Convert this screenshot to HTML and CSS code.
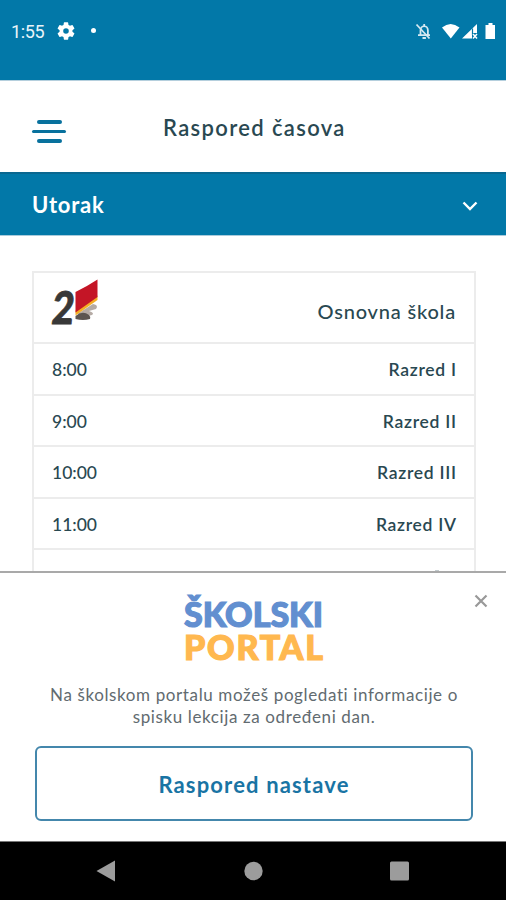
FILE: index.html
```html
<!DOCTYPE html>
<html lang="sr-Latn">

<head>
    <meta charset="UTF-8" />
    <meta name="viewport" content="width=device-width, initial-scale=1.0" />
    <title>Raspored časova</title>
    <link rel="stylesheet" href="styles.css">
</head>

<body>
    <div class="status-bar">
        <span class="clock">1:55</span>
        <svg class="gear" width="18" height="18" viewBox="2 2 20 20" fill="#fff">
            <path d="M19.14 12.94a7.1 7.1 0 0 0 0-1.88l2.03-1.58a.5.5 0 0 0 .12-.61l-1.92-3.32a.5.5 0 0 0-.59-.22l-2.39.96a7 7 0 0 0-1.62-.94l-.36-2.54A.5.5 0 0 0 13.92 2.4h-3.84a.5.5 0 0 0-.47.41l-.36 2.54a7 7 0 0 0-1.62.94l-2.39-.96a.5.5 0 0 0-.59.22L2.74 8.87a.5.5 0 0 0 .12.61l2.03 1.58a7.1 7.1 0 0 0 0 1.88l-2.03 1.58a.5.5 0 0 0-.12.61l1.92 3.32c.12.22.37.29.59.22l2.39-.96c.5.38 1.03.7 1.62.94l.36 2.54c.05.24.24.41.48.41h3.84c.24 0 .44-.17.47-.41l.36-2.54a7 7 0 0 0 1.62-.94l2.39.96c.22.08.47 0 .59-.22l1.92-3.32a.5.5 0 0 0-.12-.61zM12 15.1a3.1 3.1 0 1 1 0-6.2 3.1 3.1 0 0 1 0 6.2z" />
        </svg>
        <span class="dot"></span>
        <svg class="status-icons" width="84" height="20" viewBox="0 0 84 20">
            <g fill="none" stroke="#d5e8f1" stroke-width="1.8">
                <path d="M6.5 14V9.5a3.7 4.3 0 0 1 7.4 0V14M4 14.2h12M10.2 3v2.5M8.5 17h3.4" />
                <path d="M2.500 3.500l13 14" />
            </g>
            <path d="M28 6.5q8.5-7 17.5 0L36.8 17.500z" fill="#fff" />
            <path d="M48 17.5L63 3v9h-5v5.5z" fill="#fff" />
            <path d="M58.5 7.5V14" stroke="#0278a8" stroke-width="1.2" />
            <path d="M59 13l4 4.5m0-4.5l-4 4.5" stroke="#fff" stroke-width="1.5" />
            <path d="M72.5 4h2V2h4v2h2.500V18h-9.500V4z" fill="#fff" />
        </svg>
    </div>

    <header class="app-header">
        <div class="menu">
            <span class="short"></span>
            <span></span>
            <span class="short"></span>
        </div>
        <h1>Raspored časova</h1>
    </header>

    <div class="day-select">
        <span>Utorak</span>
        <svg width="16" height="10" viewBox="0 0 16 10" fill="none" stroke="#fff" stroke-width="2.4">
            <path d="M1.5 1.5L8 8l6.5-6.5" />
        </svg>
    </div>

    <main class="content">
        <div class="schedule">
            <div class="row school">
                <svg class="school-logo" width="48" height="50" viewBox="0 0 48 50">
                    <path d="M25 36l16-10q6 1 3 5l-7 2q6 2 3 4l-4 1z" fill="#b5aba5" />
                    <path d="M23.5 38q7-6 13.5-1 2 2 1 4-7 2-14.5 0z" fill="#5c5550" />
                    <text class="two" x="0" y="46" textLength="22" lengthAdjust="spacingAndGlyphs" transform="translate(3.5 0) skewX(-6)">2</text>
                    <path d="M23.5 32.5L45.500 17.5v4.5L23.5 37.5z" fill="#f4ad24" />
                    <path d="M23.5 14Q34 9 45.5 1.5V19L23.5 34.5z" fill="#c41526" />
                </svg>
                <span class="school-name">Osnovna škola</span>
            </div>
            <div class="row"><span>8:00</span><span class="grade">Razred I</span></div>
            <div class="row"><span>9:00</span><span class="grade">Razred II</span></div>
            <div class="row"><span>10:00</span><span class="grade">Razred III</span></div>
            <div class="row"><span>11:00</span><span class="grade">Razred IV</span></div>
            <div class="row last"></div>
        </div>
    </main>

    <section class="portal">
        <svg class="close" width="14" height="14" viewBox="0 0 14 14" stroke="#999" stroke-width="2.2">
            <path d="M1.5 1.5l11 11m0-11l-11 11" />
        </svg>
        <div class="logo">
            <svg width="144" height="33" viewBox="0 0 144 33">
                <text class="blue" x="2" y="32" textLength="139" lengthAdjust="spacing">ŠKOLSKI</text>
            </svg>
            <svg width="144" height="33" viewBox="0 0 144 33">
                <text class="orange" x="2" y="32" textLength="139" lengthAdjust="spacing">PORTAL</text>
            </svg>
        </div>
        <p><span class="line1">Na školskom portalu možeš pogledati informacije o</span><br><span class="line2">spisku lekcija za određeni dan.</span></p>
        <button type="button">Raspored nastave</button>
    </section>

    <nav class="nav-bar">
        <svg width="506" height="58" viewBox="0 0 506 58" fill="#9c9c9c">
            <path d="M96.5 29L115 18.5v21z" />
            <circle cx="253.5" cy="29" r="9.2" />
            <rect x="390" y="19.5" width="19" height="19" rx="1.5" />
        </svg>
    </nav>
</body>

</html>
```
FILE: styles.css
```css
* {
    box-sizing: border-box;
}

body {
    margin: 0;
    width: 506px;
    height: 900px;
    overflow: hidden;
    display: flex;
    flex-direction: column;
    background: #fff;
    color: #294851;
    font-family: Lato, 'Open Sans', sans-serif;
}

.status-bar {
    height: 81px;
    flex: none;
    display: flex;
    align-items: flex-start;
    padding: 21px 8px 0 11px;
    background: #0278a8;
    border-bottom: 1px solid #b5cfdd;
    color: #e9f4f9;
}

.clock {
    width: 34px;
    font-family: Roboto, sans-serif;
    font-size: 18px;
    line-height: 21px;
    letter-spacing: -0.4px;
}

.gear {
    margin: 1px 0 0 12px;
}

.dot {
    width: 5px;
    height: 5px;
    margin: 7px 0 0 16px;
    border-radius: 50%;
    background: #fff;
}

.status-icons {
    margin-left: auto;
}

.app-header {
    height: 91px;
    flex: none;
    display: flex;
    align-items: center;
    padding-left: 32px;
}

.menu {
    width: 34px;
    display: flex;
    flex-direction: column;
    align-items: center;
    gap: 6px;
    padding-top: 10px;
}

.menu span {
    width: 34px;
    height: 3.5px;
    border-radius: 2px;
    background: #08719d;
}

.menu .short {
    width: 25px;
}

h1 {
    margin: 3px 0 0 97px;
    font-size: 22px;
    font-weight: 600;
    line-height: 28px;
    letter-spacing: 1.35px;
    white-space: nowrap;
}

.day-select {
    height: 64px;
    flex: none;
    display: flex;
    align-items: center;
    justify-content: space-between;
    padding: 2px 28px 0 32px;
    background: #0278a8;
    border-top: 2px solid #0a6790;
    border-bottom: 1px solid #a9cbdc;
    color: #fff;
    font-size: 22px;
    font-weight: 700;
    letter-spacing: 0.8px;
}

.day-select span {
    margin-top: -3px;
}

.day-select svg {
    margin-top: 1px;
}

.content {
    height: 335px;
    flex: none;
    overflow: hidden;
    padding: 35px 30px 0 32px;
}

.schedule {
    border: 2px solid #ececec;
    border-bottom: none;
}

.row {
    height: 51.6px;
    display: flex;
    align-items: center;
    justify-content: space-between;
    padding: 2px 18px 0;
    border-bottom: 2px solid #ececec;
    font-size: 17.5px;
    font-weight: 500;
}

.school {
    height: 71px;
    align-items: flex-start;
    padding-top: 5px;
}

/* top of the next heading, cut by the panel */
.last::after {
    content: "";
    width: 4px;
    height: 2px;
    margin: -11px 17px 0 auto;
    background: #c3cbce;
}

.school-logo {
    overflow: visible;
}

.two {
    fill: #383838;
    stroke: #383838;
    stroke-width: 0.8;
    font-size: 45px;
    font-weight: 900;
}

.school-name {
    margin-top: 20px;
    font-size: 20px;
    line-height: 26px;
    letter-spacing: 0.8px;
}

.grade {
    font-weight: 600;
    letter-spacing: 0.7px;
    margin-right: -0.7px;
}

.portal {
    position: relative;
    height: 270px;
    flex: none;
    text-align: center;
    border-top: 2px solid #a9a9a9;
    background: #fff;
}

.close {
    position: absolute;
    top: 21px;
    right: 18px;
}

.logo {
    height: 72px;
    display: flex;
    flex-direction: column;
    align-items: flex-start;
    margin: 19px 0 0 182px;
    padding-top: 3px;
}

.logo svg {
    flex: none;
    overflow: visible;
}

.blue,
.orange {
    font-family: Lato, sans-serif;
    font-weight: 900;
    stroke-width: 1.2;
}

.blue {
    font-size: 34px;
    fill: #628fd0;
    stroke: #628fd0;
}

.orange {
    font-size: 34px;
    fill: #ffb84f;
    stroke: #ffb84f;
}

.portal p {
    margin: 20px 0 0 2px;
    color: #626b70;
    font-size: 17px;
    line-height: 22px;
    white-space: nowrap;
}

.line1,
.line2 {
    letter-spacing: 0.62px;
}

.portal button {
    display: block;
    width: 438px;
    height: 75px;
    margin: 18px 0 0 35px;
    padding: 1px 0 0;
    border: 2px solid #4487ac;
    border-radius: 6px;
    background: #fff;
    color: #1974a4;
    font-family: inherit;
    font-size: 22px;
    font-weight: 700;
    letter-spacing: 1.15px;
}

.nav-bar {
    height: 59px;
    flex: none;
    background: #000;
    border-top: 1px solid #777;
}
```
